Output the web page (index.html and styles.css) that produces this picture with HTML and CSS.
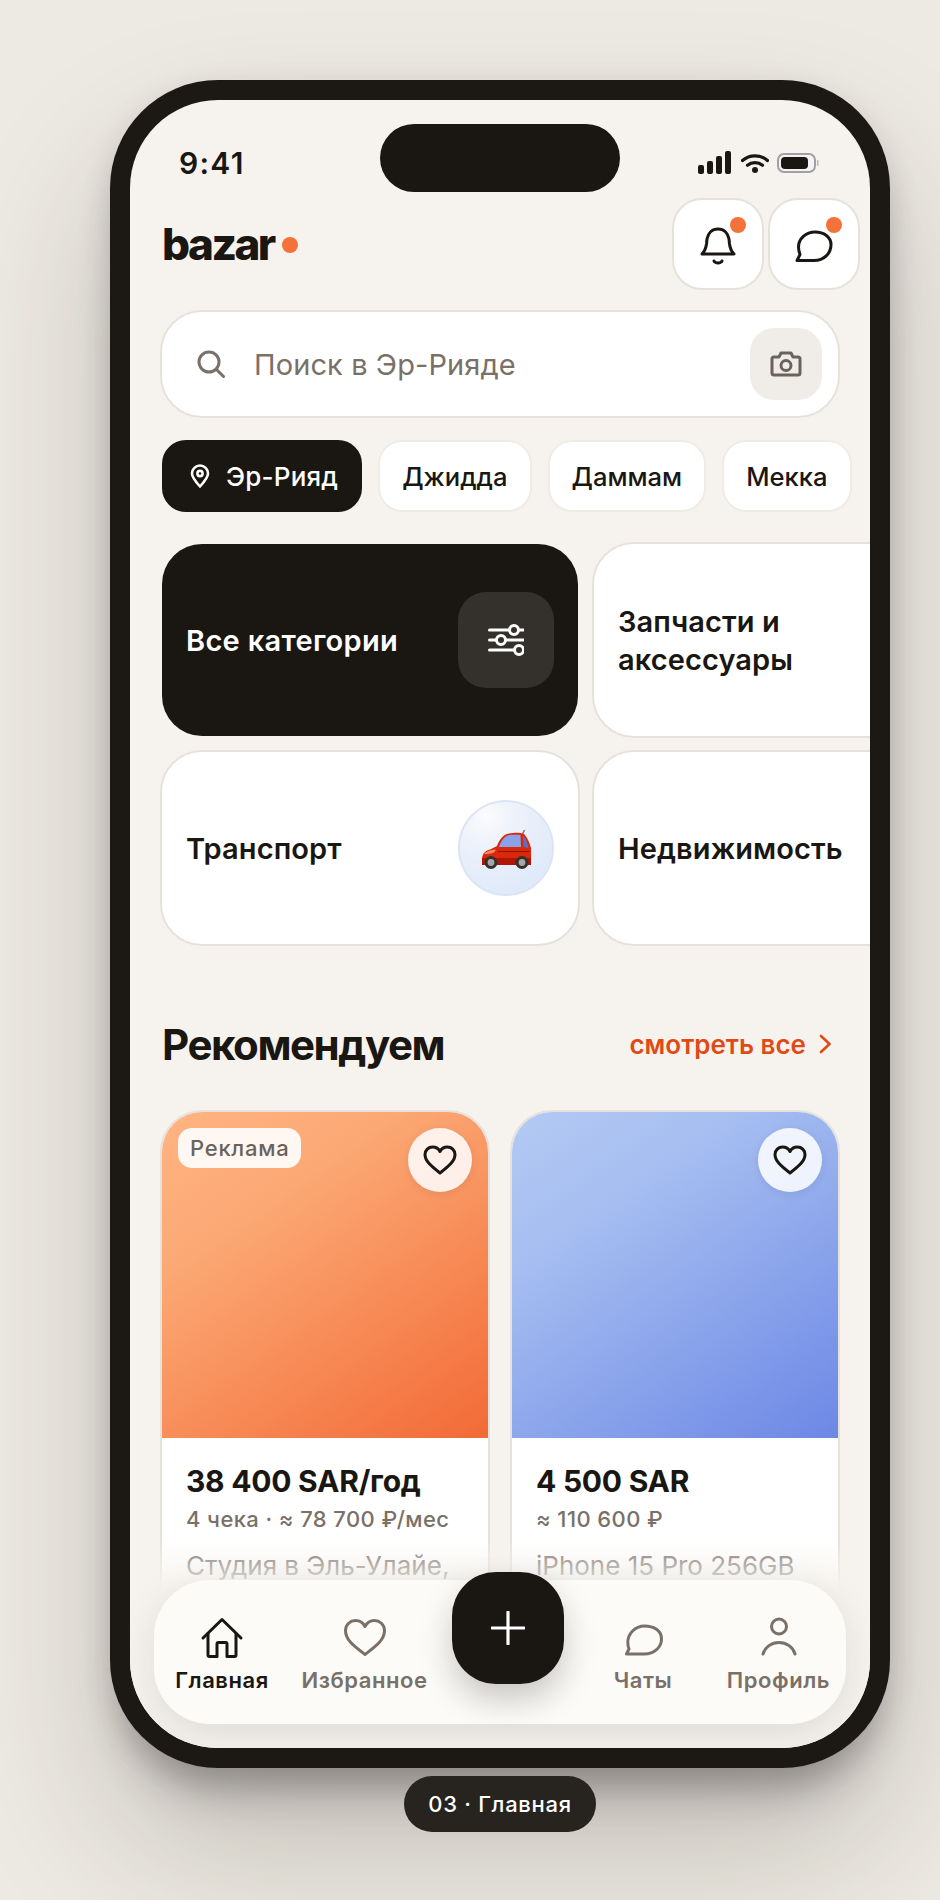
FILE: index.html
```html
<!DOCTYPE html>
<html lang="ru">
<head>
<meta charset="utf-8">
<title>bazar — Главная</title>
<link rel="stylesheet" href="styles.css">
</head>
<body>
<main class="stage">
  <div class="phone">
    <div class="screen">
      <div class="island"></div>
      <div class="status">
        <span class="time">9:41</span>
        <div class="status-icons">
          <svg class="ic-signal" viewBox="0 0 34 23"><rect x="0" y="14" width="6" height="9" rx="2"/><rect x="9" y="10" width="6" height="13" rx="2"/><rect x="18" y="5" width="6" height="18" rx="2"/><rect x="27" y="0" width="6" height="23" rx="2"/></svg>
          <svg class="ic-wifi" viewBox="0 0 28 20"><path d="M1.5 7.5C8.5 1.2 19.5 1.2 26.5 7.5" /><path d="M6.5 12.3C10.8 8.7 17.2 8.7 21.5 12.3"/><circle cx="14" cy="17" r="3" class="wifi-dot"/></svg>
          <svg class="ic-batt" viewBox="0 0 42 20"><rect x="1" y="1" width="37" height="18" rx="6" class="batt-out"/><rect x="4" y="4" width="27" height="12" rx="4"/><rect x="40" y="7" width="1.5" height="6" rx=".75" class="batt-cap"/></svg>
        </div>
      </div>

      <header class="head">
        <div class="logo"><span>bazar</span><i class="logo-dot"></i></div>
        <div class="head-btns">
          <button class="round-btn">
            <svg class="ic-bell" viewBox="0 0 36 38"><path d="M2 27C5 24 6 21 6.500 17L7 12C8 6 12 2 18 2C24 2 28 6 29 12L29.500 17C30 21 31 24 34 27Z"/><path d="M14 34C15 36.500 21 36.500 22 34"/></svg>
            <i class="badge"></i>
          </button>
          <button class="round-btn">
            <svg class="ic-chat" viewBox="0 0 38 32"><path d="M2 30.500L5 24.500C4 22 3.500 20 3.500 17C3.500 8.500 11 2 20 2C29 2 36 7 36 14.500C36 23.500 29 30.500 19 30.500Z"/></svg>
            <i class="badge"></i>
          </button>
        </div>
      </header>

      <div class="search">
        <svg class="ic-search" viewBox="0 0 28 28"><circle cx="12" cy="12" r="10"/><path d="M19.500 19.500L26.500 26.500"/></svg>
        <span class="search-text">Поиск в Эр-Рияде</span>
        <div class="cam-btn">
          <svg class="ic-cam" viewBox="0 0 32 26"><path d="M2 8a2 2 0 0 1 2-2h5l2-4h10l2 4h5a2 2 0 0 1 2 2v14a2 2 0 0 1-2 2H4a2 2 0 0 1-2-2Z"/><circle cx="16" cy="14.500" r="5"/></svg>
        </div>
      </div>

      <nav class="chips">
        <div class="chip chip-on">
          <svg class="ic-pin" viewBox="0 0 20 24"><path d="M10 22.500C5 17 2 13.500 2 9.500a8 8 0 0 1 16 0C18 13.500 15 17 10 22.500Z"/><circle cx="10" cy="9.500" r="2.600"/></svg>
          Эр-Рияд
        </div>
        <div class="chip">Джидда</div>
        <div class="chip">Даммам</div>
        <div class="chip">Мекка</div>
      </nav>

      <section class="cats">
        <div class="cat cat-dark">
          <span>Все категории</span>
          <div class="tile tile-dark">
            <svg class="ic-sliders" viewBox="0 0 36 32"><path d="M1.500 6H36M1.500 16H36M1.500 26H36"/><circle cx="26" cy="6" r="4.500"/><circle cx="13" cy="16" r="4.500"/><circle cx="31" cy="26" r="4.500"/></svg>
          </div>
        </div>
        <div class="cat"><span>Запчасти и<br>аксессуары</span></div>
        <div class="cat">
          <span>Транспорт</span>
          <div class="tile tile-car">
            <svg class="ic-car" viewBox="0 0 49 40">
              <path d="M40 5L42.500 0" class="car-ant"/>
              <path d="M0 30C0 24 3 20.500 8 19.500L15 16C17 10 21 4.500 27 3.500C32 2.500 38 2.500 42 4C46 8 47.500 13 49 18V35H0Z" fill="#d9280c"/>
              <path d="M17 17C19 11 22 6 27.500 5C31 4.500 35 4.500 38.500 5L39 17Z" fill="#8aa2e8"/>
              <path d="M41 5.500C44 9 45.500 12 46.500 18L41.500 17Z" fill="#5d6fc0"/>
              <path d="M0 28H49V35H0Z" fill="#b01505"/>
              <path d="M2 24C4 21.500 8 20 14 19.500L12 22.500C9 23.500 5 24 2 24Z" fill="#f58a66"/>
              <path d="M16 21.500H47" class="car-line"/>
              <circle cx="9" cy="32.500" r="6.500" fill="#33302e"/><circle cx="9" cy="32.500" r="3.400" fill="#a9a7a5"/>
              <circle cx="40" cy="32.500" r="6.500" fill="#33302e"/><circle cx="40" cy="32.500" r="3.400" fill="#a9a7a5"/>
            </svg>
          </div>
        </div>
        <div class="cat"><span>Недвижимость</span></div>
      </section>

      <div class="sec-head">
        <h2>Рекомендуем</h2>
        <a class="see-all">смотреть все
          <svg class="ic-chev" viewBox="0 0 12 20"><path d="M2 2L10.500 10L2 18"/></svg>
        </a>
      </div>

      <section class="cards">
        <article class="card">
          <div class="pic pic-orange">
            <span class="ad">Реклама</span>
            <div class="like"><svg class="ic-heart" viewBox="0 0 34 30"><path d="M17 28C8 21 2 16 2 9.500C2 5 5.500 2 9.500 2C12.500 2 15.500 3.500 17 6.500C18.500 3.500 21.500 2 24.500 2C28.500 2 32 5 32 9.500C32 16 26 21 17 28Z"/></svg></div>
          </div>
          <div class="info">
            <div class="price">38 400 SAR/год</div>
            <div class="sub">4 чека · ≈ 78 700 ₽/мес</div>
            <div class="name">Студия в Эль-Улайе,</div>
          </div>
        </article>
        <article class="card">
          <div class="pic pic-blue">
            <div class="like"><svg class="ic-heart" viewBox="0 0 34 30"><path d="M17 28C8 21 2 16 2 9.500C2 5 5.500 2 9.500 2C12.500 2 15.500 3.500 17 6.500C18.500 3.500 21.500 2 24.500 2C28.500 2 32 5 32 9.500C32 16 26 21 17 28Z"/></svg></div>
          </div>
          <div class="info">
            <div class="price">4 500 SAR</div>
            <div class="sub">≈ 110 600 ₽</div>
            <div class="name">iPhone 15 Pro 256GB</div>
          </div>
        </article>
      </section>

      <div class="fade"></div>

      <nav class="tabbar">
        <div class="tab tab-on">
          <svg class="ic-tab" viewBox="0 0 44 44"><path d="M3 23L22 4.500L41 23"/><path d="M8 18.500V40a1.500 1.500 0 0 0 1.500 1.500H17V29a1.500 1.500 0 0 1 1.500-1.500h7A1.500 1.500 0 0 1 27 29V41.500h7.500A1.500 1.500 0 0 0 36 40V18.500"/></svg>
          <span>Главная</span>
        </div>
        <div class="tab">
          <svg class="ic-tab" viewBox="0 0 44 44"><path d="M22 39.500C11 31 2.500 25 2.500 15.500C2.500 9.500 7.500 5.500 12.500 5.500C16.500 5.500 20 7.500 22 11.500C24 7.500 27.500 5.500 31.500 5.500C36.500 5.500 41.500 9.500 41.500 15.500C41.500 25 33 31 22 39.500Z"/></svg>
          <span>Избранное</span>
        </div>
        <div class="fab-cell">
          <div class="fab"><svg class="ic-plus" viewBox="0 0 34 34"><path d="M17 1V33M1 17H33"/></svg></div>
        </div>
        <div class="tab">
          <svg class="ic-tab" viewBox="0 0 44 44"><path d="M5.500 39L8 34C7 31.500 6.800 30 6.800 27.500C6.800 19 14 11 23.500 11C33 11 40.500 15.500 40.500 24C40.500 32.500 33 39 23.500 39Z"/></svg>
          <span>Чаты</span>
        </div>
        <div class="tab">
          <svg class="ic-tab" viewBox="0 0 44 44"><circle cx="22" cy="11.500" r="7.500"/><path d="M6 39C8 32 14.500 27.500 22 27.500C29.500 27.500 36 32 38 39"/></svg>
          <span>Профиль</span>
        </div>
      </nav>
    </div>
  </div>
  <div class="caption">03 · Главная</div>
</main>
</body>
</html>
```

FILE: styles.css
```css
* { box-sizing: border-box; }
html, body { margin: 0; padding: 0; }
body {
  width: 940px;
  height: 1900px;
  overflow: hidden;
  background: #edeae3;
  font-family: Inter, "Liberation Sans", sans-serif;
  color: #1a1612;
}
.stage {
  display: flex;
  flex-direction: column;
  align-items: center;
  width: 780px;
  margin-left: 110px;
  padding-top: 80px;
}
.phone {
  flex: none;
  width: 780px;
  height: 1688px;
  padding: 20px;
  border-radius: 108px;
  background: #1c1814;
  box-shadow: 0 80px 150px rgba(40, 34, 28, .22), 0 36px 40px -14px rgba(60, 56, 60, .34), 0 8px 30px rgba(40, 34, 28, .1);
}
.screen {
  position: relative;
  width: 740px;
  height: 1648px;
  overflow: hidden;
  border-radius: 88px;
  background: #f6f3ee;
}
.island {
  position: absolute;
  top: 24px;
  left: 250px;
  width: 240px;
  height: 68px;
  border-radius: 34px;
  background: #1a1612;
}

/* status bar */
.status {
  display: flex;
  align-items: center;
  justify-content: space-between;
  height: 98px;
  padding: 27px 51px 0 49px;
}
.time { font-size: 30px; font-weight: 600; letter-spacing: 1.3px; }
.status-icons { display: flex; align-items: center; gap: 8px; }
.ic-signal { width: 34px; height: 23px; margin-right: 1px; fill: #1a1612; }
.ic-wifi { width: 28px; height: 20px; fill: none; stroke: #1a1612; stroke-width: 3.2; stroke-linecap: round; }
.wifi-dot { fill: #1a1612; stroke: none; }
.ic-batt { width: 42px; height: 20px; fill: #1a1612; }
.batt-out { fill: none; stroke: #a0a0aa; stroke-width: 2; }
.batt-cap { fill: #b5b5bc; }

/* header */
.head {
  display: flex;
  align-items: center;
  justify-content: space-between;
  height: 92px;
  padding: 0 10px 0 32px;
}
.logo { display: flex; align-items: center; gap: 8px; font-size: 44px; font-weight: 800; letter-spacing: -2.5px; }
.logo-dot { width: 16px; height: 16px; border-radius: 50%; background: #f47237; margin-top: 2px; }
.head-btns { display: flex; gap: 4px; }
.round-btn {
  position: relative;
  display: flex;
  align-items: center;
  justify-content: center;
  width: 92px;
  height: 92px;
  padding: 0;
  border: 2px solid #e6e2db;
  border-radius: 30px;
  background: #fff;
}
.badge {
  position: absolute;
  top: 17px;
  right: 16px;
  width: 16px;
  height: 16px;
  border-radius: 50%;
  background: #f47237;
}
.ic-bell, .ic-chat { fill: none; stroke: #1a1612; stroke-width: 3; stroke-linecap: round; stroke-linejoin: round; }
.ic-bell { width: 36px; height: 38px; margin-top: 4px; }
.ic-chat { width: 38px; height: 32px; margin-top: 4px; }

/* search */
.search {
  display: flex;
  align-items: center;
  height: 108px;
  margin: 20px 30px 0;
  padding: 0 16px 0 35px;
  border: 2px solid #e6e2db;
  border-radius: 42px;
  background: #fff;
}
.ic-search { width: 28px; height: 28px; fill: none; stroke: #7a7068; stroke-width: 3; stroke-linecap: round; }
.search-text { flex: 1; margin-left: 29px; font-size: 29px; letter-spacing: .1px; color: #7a7068; }
.cam-btn {
  display: flex;
  align-items: center;
  justify-content: center;
  width: 72px;
  height: 72px;
  border-radius: 24px;
  background: #f0ede8;
}
.ic-cam { width: 32px; height: 26px; fill: none; stroke: #6b635b; stroke-width: 3; stroke-linejoin: round; }

/* chips */
.chips { display: flex; gap: 16px; margin: 22px 0 0 32px; }
.chip {
  display: flex;
  align-items: center;
  height: 72px;
  padding: 0 22px;
  border: 2px solid #efebe5;
  border-radius: 24px;
  background: #fff;
  font-size: 25.600px;
  font-weight: 500;
  white-space: nowrap;
}
.chip-on {
  gap: 16px;
  padding: 0 22px 0 26px;
  border-color: #1a1612;
  background: #1a1612;
  color: #fff;
  font-size: 26px;
  letter-spacing: .2px;
}
.ic-pin { width: 20px; height: 24px; fill: none; stroke: #fff; stroke-width: 2.600; stroke-linejoin: round; }

/* categories */
.cats {
  display: grid;
  grid-template-columns: 420px 420px;
  grid-auto-rows: 196px;
  gap: 12px;
  margin: 30px 0 0 30px;
}
.cat {
  display: flex;
  align-items: center;
  justify-content: space-between;
  padding: 0 24px;
  border: 2px solid #e6e2db;
  border-radius: 42px;
  background: #fff;
  font-size: 29px;
  font-weight: 600;
  letter-spacing: .1px;
  line-height: 38px;
}
.cat span { margin-top: 2px; }
.cat-dark { border-color: transparent; background: #1a1612; background-clip: padding-box; color: #fff; letter-spacing: .3px; }
.tile {
  display: flex;
  align-items: center;
  justify-content: center;
  flex: none;
  width: 96px;
  height: 96px;
}
.tile-dark { border-radius: 28px; background: #34302c; }
.ic-sliders { width: 36px; height: 32px; fill: #34302c; stroke: #fff; stroke-width: 3; stroke-linecap: round; }
.tile-car {
  border: 2px solid #dbe5f4;
  border-radius: 50%;
  background: radial-gradient(circle at 28% 16%, #fafbfd 0, #eef2fa 28%, #e0eafa 75%);
}
.ic-car { width: 49px; height: 40px; margin-top: 4px; }
.car-ant { stroke: #777; stroke-width: 1.500; fill: none; }
.car-line { stroke: #8f1203; stroke-width: 1; fill: none; }

/* section */
.sec-head {
  display: flex;
  align-items: center;
  justify-content: space-between;
  height: 60px;
  margin: 68px 39px 0 32px;
}
.sec-head h2 { margin: 0; font-size: 42px; font-weight: 700; letter-spacing: -1.45px; }
.see-all {
  display: flex;
  align-items: center;
  gap: 13px;
  font-size: 26px;
  font-weight: 600;
  color: #e04a16;
}
.ic-chev { width: 12px; height: 20px; fill: none; stroke: #e04a16; stroke-width: 2.600; stroke-linecap: round; stroke-linejoin: round; }

/* cards */
.cards { display: grid; grid-template-columns: 330px 330px; gap: 20px; margin: 36px 0 0 30px; }
.card { border: 2px solid #e6e2db; border-radius: 42px; background: #fff; overflow: hidden; }
.pic { position: relative; height: 326px; }
.pic-orange { background: linear-gradient(145deg, #ffb482 0%, #fba874 30%, #f26a36 100%); }
.pic-blue { background: linear-gradient(145deg, #b4caf4 0%, #a5bdf0 30%, #6c88e5 100%); }
.ad {
  position: absolute;
  top: 16px;
  left: 16px;
  display: flex;
  align-items: center;
  height: 40px;
  padding: 0 12px;
  border-radius: 14px;
  background: rgba(255, 255, 255, .9);
  font-size: 22px;
  font-weight: 500;
  letter-spacing: .75px;
  color: #6b635b;
}
.like {
  position: absolute;
  top: 16px;
  right: 16px;
  display: flex;
  align-items: center;
  justify-content: center;
  width: 64px;
  height: 64px;
  border-radius: 50%;
  background: rgba(255, 255, 255, .85);
  box-shadow: 0 2px 8px rgba(26, 22, 18, .08);
}
.ic-heart { width: 34px; height: 30px; fill: none; stroke: #1a1612; stroke-width: 3; stroke-linejoin: round; }
.info { padding: 25px 24px 90px; }
.price { font-size: 30px; line-height: 36px; font-weight: 700; letter-spacing: -.25px; }
.sub { margin-top: 6px; font-size: 22px; line-height: 28px; font-weight: 500; letter-spacing: .4px; color: #7a7068; }
.name { margin-top: 15px; font-size: 26px; line-height: 36px; color: #7a7068; }

/* fade & tabbar */
.fade {
  position: absolute;
  left: 0;
  right: 0;
  bottom: 0;
  height: 208px;
  background: linear-gradient(to bottom, rgba(246, 243, 238, 0) 0, #f6f3ee 24%);
}
.tabbar {
  position: absolute;
  left: 24px;
  bottom: 24px;
  display: grid;
  grid-template-columns: 136px 149px 138px 132px 139px;
  width: 692px;
  height: 144px;
  border-radius: 56px;
  background: #fcfbf8;
  box-shadow: 0 12px 40px rgba(26, 22, 18, .1);
}
.tab {
  display: flex;
  flex-direction: column;
  align-items: center;
  padding-top: 35px;
  font-size: 22px;
  font-weight: 600;
  letter-spacing: .55px;
  color: #7a7068;
  white-space: nowrap;
}
.tab span { margin-top: 8px; }
.tab-on { color: #1a1612; }
.ic-tab { width: 44px; height: 44px; fill: none; stroke: #7a7068; stroke-width: 3; stroke-linecap: round; stroke-linejoin: round; }
.tab-on .ic-tab { stroke: #1a1612; }
.fab-cell { display: flex; justify-content: center; }
.fab {
  display: flex;
  align-items: center;
  justify-content: center;
  width: 112px;
  height: 112px;
  margin-top: -8px;
  border-radius: 44px;
  background: #1a1612;
  box-shadow: 0 16px 32px rgba(26, 22, 18, .22);
}
.ic-plus { width: 34px; height: 34px; fill: none; stroke: #fff; stroke-width: 3.200; stroke-linecap: round; }

/* caption */
.caption {
  display: flex;
  align-items: center;
  height: 56px;
  margin-top: 8px;
  padding: 0 24px;
  border-radius: 28px;
  background: #27241f;
  color: #fff;
  font-size: 22px;
  font-weight: 500;
  letter-spacing: .7px;
  white-space: nowrap;
}
```
